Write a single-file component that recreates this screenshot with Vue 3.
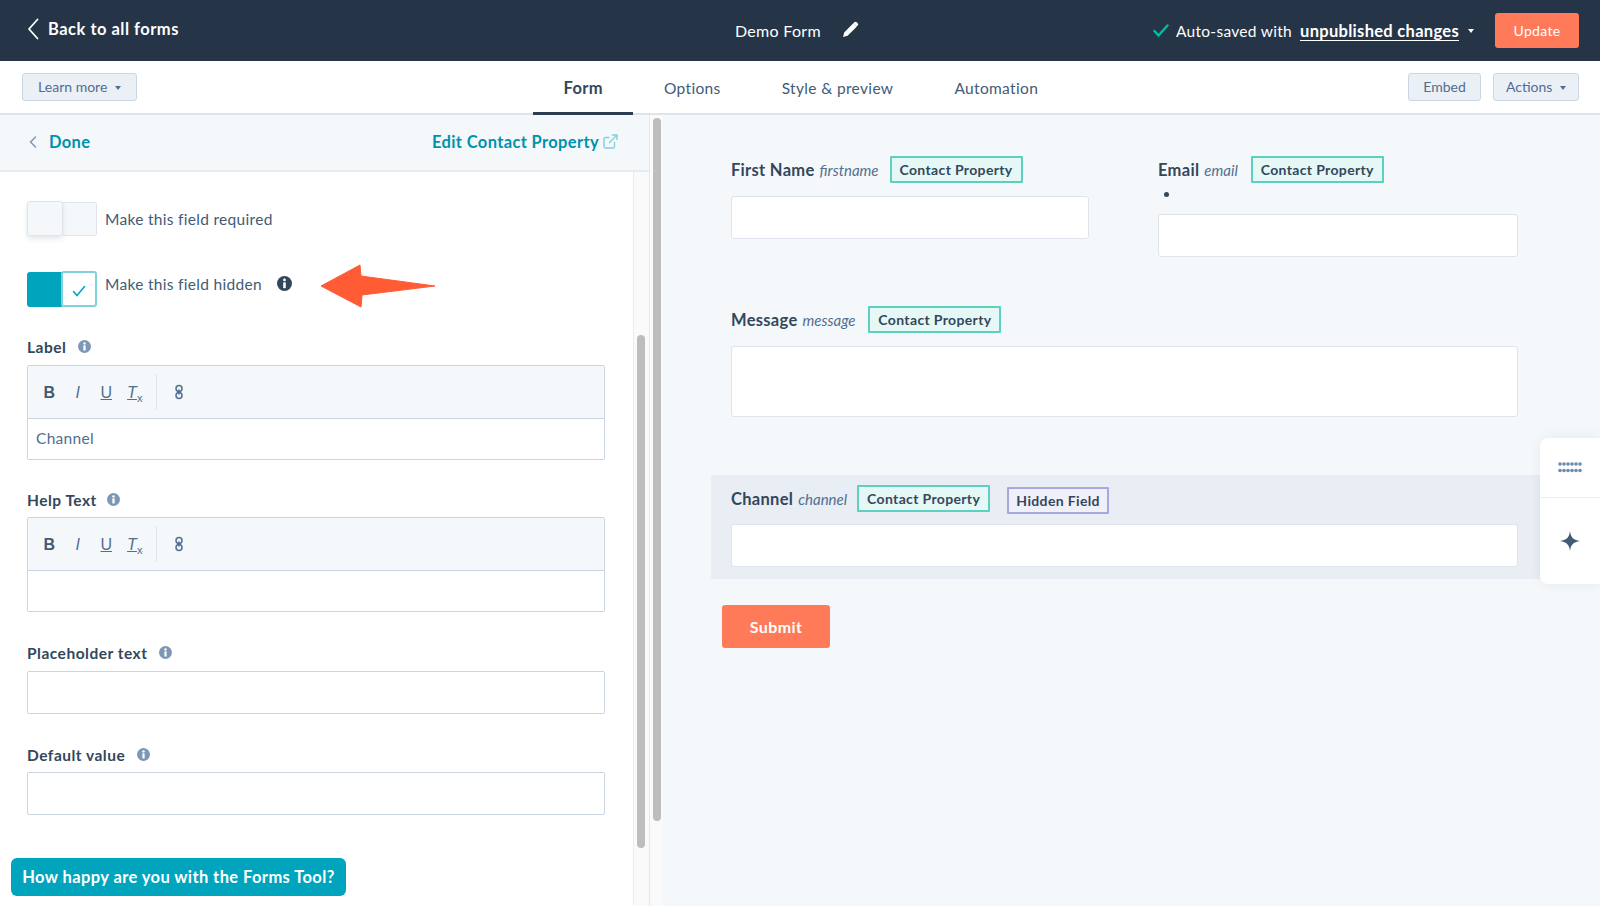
<script setup>
const tabs = ["Form", "Options", "Style & preview", "Automation"];
const tools = ["B", "I", "U"];
</script>

<template>
  <div class="page">
    <header class="topbar">
      <a class="back">
        <svg width="12" height="22" viewBox="0 0 12 22"><path d="M10.500 1.500 2 11l8.500 9.500" fill="none" stroke="#fff" stroke-width="1.800" stroke-linecap="round" stroke-linejoin="round"/></svg>
        <span>Back to all forms</span>
      </a>
      <div class="title">
        <span>Demo Form</span>
        <svg width="17" height="17" viewBox="0 0 17 17"><path d="M1 16l1.200-4.600L11.300 2.300l3.400 3.400-9.100 9.100zM12.300 1.300c.8-.8 1.700-.8 2.400-.1l1 1c.7.700.7 1.600-.1 2.400l-.9.900-3.300-3.300z" fill="#fff"/></svg>
      </div>
      <div class="status">
        <svg width="16" height="13" viewBox="0 0 16 13"><path d="M1.500 7 5.500 11.500 14.500 1.500" fill="none" stroke="#00bda5" stroke-width="2.400" stroke-linecap="round"/></svg>
        <span class="saved">Auto-saved with</span>
        <span class="unpub">unpublished changes</span>
        <i class="caret white"></i>
        <button class="update">Update</button>
      </div>
    </header>

    <nav class="tabbar">
      <div class="tabbar-left">
        <button class="light learn">Learn more <i class="caret"></i></button>
      </div>
      <div class="tabs">
        <a v-for="(t, i) in tabs" :key="t" class="tab" :class="{ active: i === 0 }">{{ t }}</a>
      </div>
      <div class="tabbar-right">
        <button class="light embed">Embed</button>
        <button class="light actions">Actions <i class="caret"></i></button>
      </div>
    </nav>

    <main class="main">
      <aside class="side">
        <div class="side-head">
          <a class="done">
            <svg width="8" height="12" viewBox="0 0 8 12"><path d="M6.500 1 1.500 6l5 5" fill="none" stroke="#7c98b6" stroke-width="1.500" stroke-linecap="round"/></svg>
            <span>Done</span>
          </a>
          <a class="edit">
            <span>Edit Contact Property</span>
            <svg width="15" height="15" viewBox="0 0 15 15" fill="none" stroke="#7fd1de" stroke-width="1.400" stroke-linecap="round"><path d="M11.500 8.500v4a1.500 1.500 0 0 1-1.500 1.500H2.500A1.500 1.500 0 0 1 1 12.500V5A1.500 1.500 0 0 1 2.500 3.500H6"/><path d="M9.500 1H14v4.500M14 1 6.500 8.500"/></svg>
          </a>
        </div>
        <div class="side-body">
          <div class="side-content">
            <div class="toggle-row first">
              <div class="toggle off"><span class="knob"></span><span class="rest"></span></div>
              <span>Make this field required</span>
            </div>
            <div class="toggle-row second">
              <div class="toggle on">
                <span class="fill"></span>
                <span class="knob">
                  <svg width="14" height="12" viewBox="0 0 14 12"><path d="M1.500 6.500 5 10.500 12.500 1.500" fill="none" stroke="#00a4bd" stroke-width="1.500" stroke-linecap="round"/></svg>
                </span>
              </div>
              <span class="hidden-text">Make this field hidden</span>
              <svg class="info-dark" width="15" height="15" viewBox="0 0 15 15"><circle cx="7.500" cy="7.500" r="7.500" fill="#33475b"/><circle cx="7.500" cy="3.900" r="1.400" fill="#fff"/><rect x="6.200" y="6.200" width="2.600" height="6" rx=".6" fill="#fff"/></svg>
              <svg class="arrow" width="116" height="44" viewBox="0 0 116 44"><path d="M1 22 40 1 41 12 115 22 42 31 41 43z" fill="#ff5c35" stroke="#ff5c35" stroke-linejoin="round"/></svg>
            </div>

            <div class="label lab-label">
              Label
              <svg class="info" width="13" height="13" viewBox="0 0 15 15"><circle cx="7.500" cy="7.500" r="7.500" fill="#7c98b6"/><circle cx="7.500" cy="3.900" r="1.400" fill="#fff"/><rect x="6.200" y="6.200" width="2.600" height="6" rx=".6" fill="#fff"/></svg>
            </div>
            <div class="editor">
              <div class="toolbar">
                <span v-for="t in tools" :key="t" class="tool" :class="'tool-' + t">{{ t }}</span>
                <span class="tool tool-T">T<sub>x</sub></span>
                <span class="tool-sep"></span>
                <svg class="link" width="10" height="16" viewBox="0 0 10 16" fill="none" stroke="#516f90" stroke-width="1.500"><rect x="2" y="1.500" width="6" height="6" rx="3"/><rect x="2" y="8.500" width="6" height="6" rx="3"/><path d="M5 5.500v5"/></svg>
              </div>
              <div class="editor-text">Channel</div>
            </div>

            <div class="label lab-help">
              Help Text
              <svg class="info" width="13" height="13" viewBox="0 0 15 15"><circle cx="7.500" cy="7.500" r="7.500" fill="#7c98b6"/><circle cx="7.500" cy="3.900" r="1.400" fill="#fff"/><rect x="6.200" y="6.200" width="2.600" height="6" rx=".6" fill="#fff"/></svg>
            </div>
            <div class="editor tight">
              <div class="toolbar">
                <span v-for="t in tools" :key="t" class="tool" :class="'tool-' + t">{{ t }}</span>
                <span class="tool tool-T">T<sub>x</sub></span>
                <span class="tool-sep"></span>
                <svg class="link" width="10" height="16" viewBox="0 0 10 16" fill="none" stroke="#516f90" stroke-width="1.500"><rect x="2" y="1.500" width="6" height="6" rx="3"/><rect x="2" y="8.500" width="6" height="6" rx="3"/><path d="M5 5.500v5"/></svg>
              </div>
              <div class="editor-text"></div>
            </div>

            <div class="label lab-place">
              Placeholder text
              <svg class="info" width="13" height="13" viewBox="0 0 15 15"><circle cx="7.500" cy="7.500" r="7.500" fill="#7c98b6"/><circle cx="7.500" cy="3.900" r="1.400" fill="#fff"/><rect x="6.200" y="6.200" width="2.600" height="6" rx=".6" fill="#fff"/></svg>
            </div>
            <div class="plain-input"></div>

            <div class="label lab-default">
              Default value
              <svg class="info" width="13" height="13" viewBox="0 0 15 15"><circle cx="7.500" cy="7.500" r="7.500" fill="#7c98b6"/><circle cx="7.500" cy="3.900" r="1.400" fill="#fff"/><rect x="6.200" y="6.200" width="2.600" height="6" rx=".6" fill="#fff"/></svg>
            </div>
            <div class="plain-input tight"></div>
          </div>
          <div class="track"><span class="thumb inner"></span></div>
        </div>
        <button class="survey">How happy are you with the Forms Tool?</button>
      </aside>

      <div class="outer-track"><span class="thumb outer"></span></div>

      <section class="preview">
        <div class="row">
          <div class="field half">
            <div class="field-head">
              <b>First Name</b><em>firstname</em>
              <span class="badge contact">Contact Property</span>
            </div>
            <div class="input"></div>
          </div>
          <div class="field half wide">
            <div class="field-head">
              <b>Email</b><em>email</em>
              <span class="badge contact">Contact Property</span>
            </div>
            <div class="required-dot"></div>
            <div class="input"></div>
          </div>
        </div>

        <div class="field message">
          <div class="field-head">
            <b>Message</b><em>message</em>
            <span class="badge contact">Contact Property</span>
          </div>
          <div class="input tall"></div>
        </div>

        <div class="band">
          <div class="field">
            <div class="field-head">
              <b>Channel</b><em>channel</em>
              <span class="badge contact">Contact Property</span>
              <span class="badge hidden-field">Hidden Field</span>
            </div>
            <div class="input"></div>
          </div>
        </div>

        <button class="submit">Submit</button>

        <div class="widget">
          <div class="widget-top">
            <svg width="24" height="11" viewBox="0 0 24 11" fill="#6a8bb0">
              <g v-for="x in 6" :key="x">
                <circle :cx="x * 4 - 2" cy="2" r="1.800"/>
                <circle :cx="x * 4 - 2" cy="8.500" r="1.800"/>
              </g>
            </svg>
          </div>
          <div class="widget-bottom">
            <svg width="20" height="20" viewBox="0 0 20 20"><path d="M10 0c.7 6 3 9 10 10-7 1-9.300 4-10 10-.7-6-3-9-10-10C7 9 9.300 6 10 0z" fill="#425b76"/></svg>
          </div>
        </div>
      </section>
    </main>
  </div>
</template>

<style>
html, body {
  margin: 0;
  background: #fff;
}
</style>

<style scoped>
.page {
  width: 1600px;
  height: 906px;
  overflow: hidden;
  display: flex;
  flex-direction: column;
  font-family: Lato, "Open Sans", sans-serif;
  color: #33475b;
  position: relative;
}
button {
  font-family: inherit;
  cursor: pointer;
}

.topbar {
  height: 61px;
  flex: none;
  background: #253446;
  color: #fff;
  display: grid;
  grid-template-columns: 735px auto 1fr;
  align-items: center;
}
.back {
  display: flex;
  align-items: center;
  padding-left: 27px;
  gap: 9px;
  font-size: 16.500px;
  font-weight: 700;
  letter-spacing: 0.5px;
  margin-top: -4px;
}
.title {
  display: flex;
  align-items: center;
  gap: 21px;
  font-size: 16px;
  letter-spacing: 0.3px;
}
.title svg {
  margin-top: -3px;
}
.status {
  display: flex;
  align-items: center;
  justify-content: flex-end;
  padding-right: 22px;
  font-size: 16.500px;
}
.saved {
  margin-left: 7px;
  font-size: 15.500px;
  letter-spacing: 0.3px;
}
.unpub {
  margin-left: 8px;
  font-weight: 700;
  letter-spacing: 0.3px;
  text-decoration: underline;
  text-underline-offset: 3px;
}
.caret {
  display: inline-block;
  width: 0;
  height: 0;
  border: 3.500px solid transparent;
  border-top: 4px solid #516f90;
  border-bottom: 0;
  vertical-align: middle;
}
.caret.white {
  border-top-color: #fff;
  margin-left: 9px;
}
.update {
  width: 84px;
  height: 35px;
  margin-left: 21px;
  margin-right: -1px;
  border: 0;
  border-radius: 3px;
  background: #ff7a59;
  color: #fff;
  font-size: 14px;
  letter-spacing: 0.3px;
}

.tabbar {
  height: 54px;
  flex: none;
  box-sizing: border-box;
  border-bottom: 2px solid #dfe3eb;
  display: grid;
  grid-template-columns: 533px auto 1fr;
  align-items: center;
  background: #fff;
}
.tabbar-left {
  padding-left: 22px;
}
.light {
  height: 28px;
  border: 1px solid #cbd6e2;
  border-radius: 3px;
  background: #eaf0f6;
  color: #506e91;
  font-size: 14px;
  padding: 0 0 2px;
}
.learn {
  width: 115px;
}
.learn .caret,
.actions .caret {
  margin-left: 4px;
}
.embed {
  width: 73px;
}
.actions {
  width: 86px;
}
.tabs {
  display: flex;
  height: 100%;
}
.tab {
  padding: 2px 30.500px 0;
  font-size: 15.500px;
  letter-spacing: 0.35px;
  display: flex;
  align-items: center;
  color: #425b76;
  margin-bottom: -2px;
  box-sizing: border-box;
  border-bottom: 3px solid transparent;
}
.tab.active {
  font-size: 16.500px;
  color: #33475b;
  font-weight: 700;
  border-bottom-color: #2d3e50;
}
.tabbar-right {
  display: flex;
  justify-content: flex-end;
  gap: 12px;
  padding-right: 21px;
}

.main {
  flex: 1;
  display: flex;
  min-height: 0;
}
.side {
  width: 649px;
  flex: none;
  display: flex;
  flex-direction: column;
  position: relative;
}
.side-head {
  height: 57px;
  flex: none;
  box-sizing: border-box;
  background: #f5f8fa;
  border-bottom: 2px solid #e6ecf2;
  display: flex;
  align-items: center;
  justify-content: space-between;
  padding: 0 31px 2px 29px;
  font-size: 16.500px;
  font-weight: 700;
  color: #0091ae;
  letter-spacing: 0.35px;
}
.done,
.edit {
  display: flex;
  align-items: center;
}
.done {
  gap: 12px;
}
.edit {
  gap: 4px;
}
.side-body {
  flex: 1;
  display: flex;
  min-height: 0;
}
.side-content {
  width: 633px;
  box-sizing: border-box;
  padding: 29px 28px 0 27px;
  background: #fff;
}
.track {
  width: 16px;
  background: #fafafa;
  border-left: 1px solid #ececec;
  box-sizing: border-box;
  position: relative;
}
.thumb {
  display: block;
  width: 8px;
  border-radius: 4px;
  background: #bdbdbd;
  position: absolute;
}
.thumb.inner {
  left: 3px;
  top: 163px;
  height: 513px;
}
.outer-track {
  width: 14px;
  flex: none;
  background: #fafafa;
  position: relative;
  border-left: 1px solid #e8e8e8;
  box-sizing: border-box;
}
.thumb.outer {
  left: 3px;
  top: 3px;
  height: 703px;
}

.toggle-row {
  display: flex;
  align-items: center;
  gap: 8px;
  font-size: 15.500px;
  color: #425b76;
  letter-spacing: 0.3px;
  position: relative;
}
.toggle-row.first {
  height: 36px;
}
.toggle-row.second {
  height: 36px;
  margin-top: 34px;
}
.hidden-text {
  margin-top: -10px;
}
.toggle {
  width: 70px;
  height: 36px;
  display: flex;
  position: relative;
  flex: none;
}
.toggle.off .knob {
  width: 36px;
  height: 35px;
  box-sizing: border-box;
  border: 1px solid #dfe3eb;
  border-radius: 3px;
  background: #f5f8fa;
  box-shadow: 0 3px 5px rgba(45, 62, 80, 0.12);
  position: relative;
}
.toggle.off .rest {
  width: 34px;
  height: 34px;
  box-sizing: border-box;
  border: 1px solid #dfe3eb;
  border-left: 0;
  border-radius: 0 3px 3px 0;
  background: #f5f8fa;
  margin-top: 1px;
}
.toggle.on .fill {
  width: 36px;
  height: 35px;
  background: #00a4bd;
  border-radius: 3px 0 0 3px;
  margin-top: 1px;
}
.toggle.on .knob {
  width: 36px;
  height: 36px;
  box-sizing: border-box;
  border: 2px solid #7fd1de;
  border-radius: 3px;
  background: #fff;
  margin-left: -1px;
  display: flex;
  align-items: center;
  justify-content: center;
}
.toggle.on .knob svg {
  margin-top: 3px;
}
.info-dark {
  margin-left: 7px;
  margin-top: -11px;
}
.arrow {
  position: absolute;
  left: 293px;
  top: -7px;
}

.label {
  font-size: 15.500px;
  font-weight: 700;
  color: #33475b;
  letter-spacing: 0.5px;
  display: flex;
  align-items: center;
  gap: 12px;
  height: 20px;
}
.lab-label {
  margin-top: 30px;
}
.lab-help {
  margin-top: 30px;
  gap: 10px;
}
.lab-place {
  margin-top: 31px;
}
.lab-default {
  margin-top: 31px;
}
.label .info {
  margin-top: -2px;
}
.editor {
  margin-top: 8px;
  border: 1px solid #cbd6e2;
  border-radius: 2px;
  background: #fff;
}
.editor.tight {
  margin-top: 7px;
}
.toolbar {
  height: 53px;
  box-sizing: border-box;
  background: #f5f8fa;
  border-bottom: 1px solid #cbd6e2;
  display: flex;
  align-items: center;
  position: relative;
  color: #425b76;
}
.tool {
  width: 28.500px;
  text-align: center;
  font-size: 16px;
  color: #516f90;
  font-family: "Liberation Sans", sans-serif;
  margin-top: 1px;
}
.tool:first-child {
  margin-left: 7px;
}
.tool-B {
  font-weight: 700;
  color: #425b76;
}
.tool-I {
  font-style: italic;
}
.tool-U {
  text-decoration: underline;
}
.tool-T {
  font-style: italic;
  text-decoration: underline;
}
.tool-T sub {
  font-size: 11px;
  font-style: normal;
  line-height: 0;
}
.tool-sep {
  width: 1px;
  height: 36px;
  background: #dfe3eb;
  margin-left: 7px;
  margin-right: 17px;
}
.editor-text {
  height: 40px;
  padding: 0 0 2px 8px;
  box-sizing: border-box;
  display: flex;
  align-items: center;
  font-size: 15.500px;
  letter-spacing: 0.3px;
  color: #516f90;
}
.plain-input {
  height: 43px;
  margin-top: 8px;
  box-sizing: border-box;
  border: 1px solid #cbd6e2;
  border-radius: 2px;
  background: #fff;
}
.plain-input.tight {
  margin-top: 7px;
}
.survey {
  position: absolute;
  left: 11px;
  bottom: 10px;
  width: 335px;
  height: 38px;
  border: 0;
  border-radius: 6px;
  background: #00a4bd;
  color: #fff;
  font-size: 16.500px;
  font-weight: 700;
  letter-spacing: 0.4px;
  padding: 0;
}

.preview {
  flex: 1;
  background: #f5f8fa;
  padding: 41px 0 0 68px;
  position: relative;
}
.row {
  display: flex;
  gap: 69px;
}
.half {
  width: 358px;
}
.half.wide {
  width: 360px;
}
.field-head {
  height: 27px;
  display: flex;
  align-items: center;
  font-size: 16.500px;
  letter-spacing: 0.3px;
  color: #33475b;
}
.field-head em {
  font-size: 15px;
  color: #516f90;
  margin-left: 5px;
  letter-spacing: 0;
}
.field-head b {
  font-weight: 700;
}
.badge {
  height: 27px;
  box-sizing: border-box;
  display: flex;
  align-items: center;
  justify-content: center;
  font-size: 14px;
  font-weight: 700;
  letter-spacing: 0.35px;
  color: #33475b;
  border-radius: 1px;
}
.contact {
  width: 133px;
  margin-left: 13px;
  border: 2px solid #5dd0bf;
  background: #e5f8f6;
}
.half:first-child .contact {
  margin-left: 11px;
}
.band .contact {
  margin-left: 10px;
}
.hidden-field {
  width: 102px;
  margin-left: 17px;
  margin-top: 4px;
  border: 2px solid #a8a8e0;
  background: #f0f0fa;
}
.input {
  height: 43px;
  margin-top: 13px;
  box-sizing: border-box;
  border: 1px solid #dfe3eb;
  border-radius: 3px;
  background: #fff;
}
.input.tall {
  height: 71px;
}
.required-dot {
  width: 5px;
  height: 5px;
  border-radius: 50%;
  background: #33475b;
  margin: 9px 0 0 6px;
}
.required-dot + .input {
  margin-top: 17px;
}
.message {
  width: 787px;
  margin-top: 49px;
}
.band {
  width: 787px;
  margin: 58px 0 0 -20px;
  padding: 10px 24px 12px 20px;
  background: #e8eef3;
}
.band .input {
  margin-top: 12px;
}
.submit {
  display: block;
  width: 108px;
  height: 43px;
  margin: 26px 0 0 -9px;
  border: 0;
  border-radius: 3px;
  background: #ff7a59;
  color: #fff;
  font-size: 16px;
  font-weight: 700;
  letter-spacing: 0.4px;
}
.widget {
  position: absolute;
  right: 0;
  top: 323px;
  width: 60px;
  height: 146px;
  background: #fff;
  border-radius: 8px 0 0 8px;
  box-shadow: 0 0 12px rgba(45, 62, 80, 0.08);
  display: flex;
  flex-direction: column;
}
.widget-top {
  height: 60px;
  box-sizing: border-box;
  border-bottom: 1px solid #eaf0f6;
  display: flex;
  align-items: center;
  justify-content: center;
}
.widget-bottom {
  flex: 1;
  display: flex;
  align-items: center;
  justify-content: center;
}
</style>
